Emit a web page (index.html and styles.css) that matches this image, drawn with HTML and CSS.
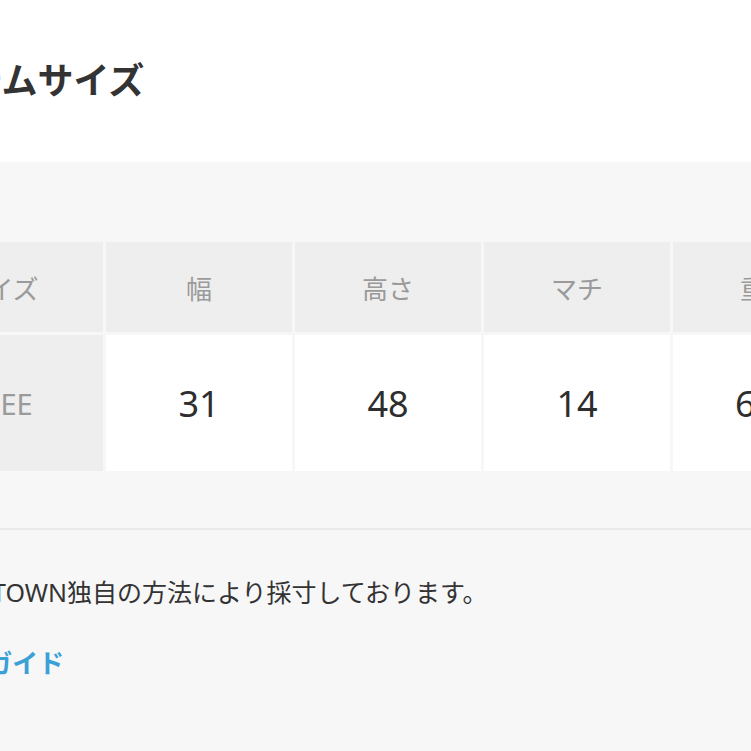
FILE: index.html
```html
<!DOCTYPE html>
<html lang="ja">
<head>
<meta charset="utf-8">
<link rel="stylesheet" href="styles.css">
</head>
<body>
<div class="page">
  <h2 class="title">アイテムサイズ</h2>
  <section class="sizes">
    <table class="size-table">
      <thead>
        <tr>
          <th class="col-first">サイズ</th>
          <th>幅</th>
          <th>高さ</th>
          <th>マチ</th>
          <th>重量</th>
        </tr>
      </thead>
      <tbody>
        <tr>
          <th class="col-first size-name">FREE</th>
          <td>31</td>
          <td>48</td>
          <td>14</td>
          <td>650</td>
        </tr>
      </tbody>
    </table>
    <hr class="divider">
    <p class="note">※ZOZOTOWN独自の方法により採寸しております。</p>
    <a class="guide" href="#">サイズガイド</a>
  </section>
</div>
</body>
</html>
```

FILE: styles.css
```css
html, body {
  margin: 0;
  padding: 0;
  background: #ffffff;
  overflow: hidden;
}
body {
  width: 751px;
  height: 751px;
  font-family: "Noto Sans CJK JP", "Noto Sans", sans-serif;
  color: #333333;
}
.page {
  margin-left: -103px;
  width: 854px;
  overflow: hidden;
}
.title {
  margin: 0;
  padding: 56px 0 0 0;
  height: 162px;
  box-sizing: border-box;
  font-size: 36px;
  line-height: 44px;
  font-weight: 700;
  color: #333333;
}
.sizes {
  background: #f7f7f7;
  padding-top: 77px;
  height: 589px;
  box-sizing: border-box;
  overflow: hidden;
}
.size-table {
  width: 968px;
  border-collapse: separate;
  border-spacing: 3px;
  margin-left: -3px;
  table-layout: fixed;
}
.size-table th,
.size-table td {
  text-align: center;
  padding: 0;
  width: 186px;
}
.size-table .col-first {
  width: 206px;
}
.size-table thead th {
  height: 90px;
  background: #eeeeee;
  color: #9a9a9a;
  font-size: 26px;
  font-weight: 400;
}
.size-table tbody td,
.size-table tbody th {
  height: 136px;
}
.size-table tbody td {
  background: #ffffff;
  font-family: "Noto Sans", sans-serif;
  font-size: 36px;
  font-weight: 400;
  color: #2e2e2e;
}
.size-table .size-name {
  background: #eeeeee;
  color: #9a9a9a;
  font-family: "Noto Sans", sans-serif;
  font-size: 29px;
  font-weight: 400;
}
.divider {
  width: 854px;
  margin: 54px 0 0 0;
  border: 0;
  height: 2px;
  background: #e9e9e9;
}
.note {
  margin: 44px 0 0 8px;
  font-family: "Noto Sans", "Noto Sans CJK JP", sans-serif;
  font-size: 25px;
  line-height: 36px;
  color: #333333;
}
.guide {
  display: block;
  margin: 34px 0 0 12px;
  font-size: 26px;
  line-height: 36px;
  font-weight: 700;
  color: #3aa0d6;
  text-decoration: none;
}
```
